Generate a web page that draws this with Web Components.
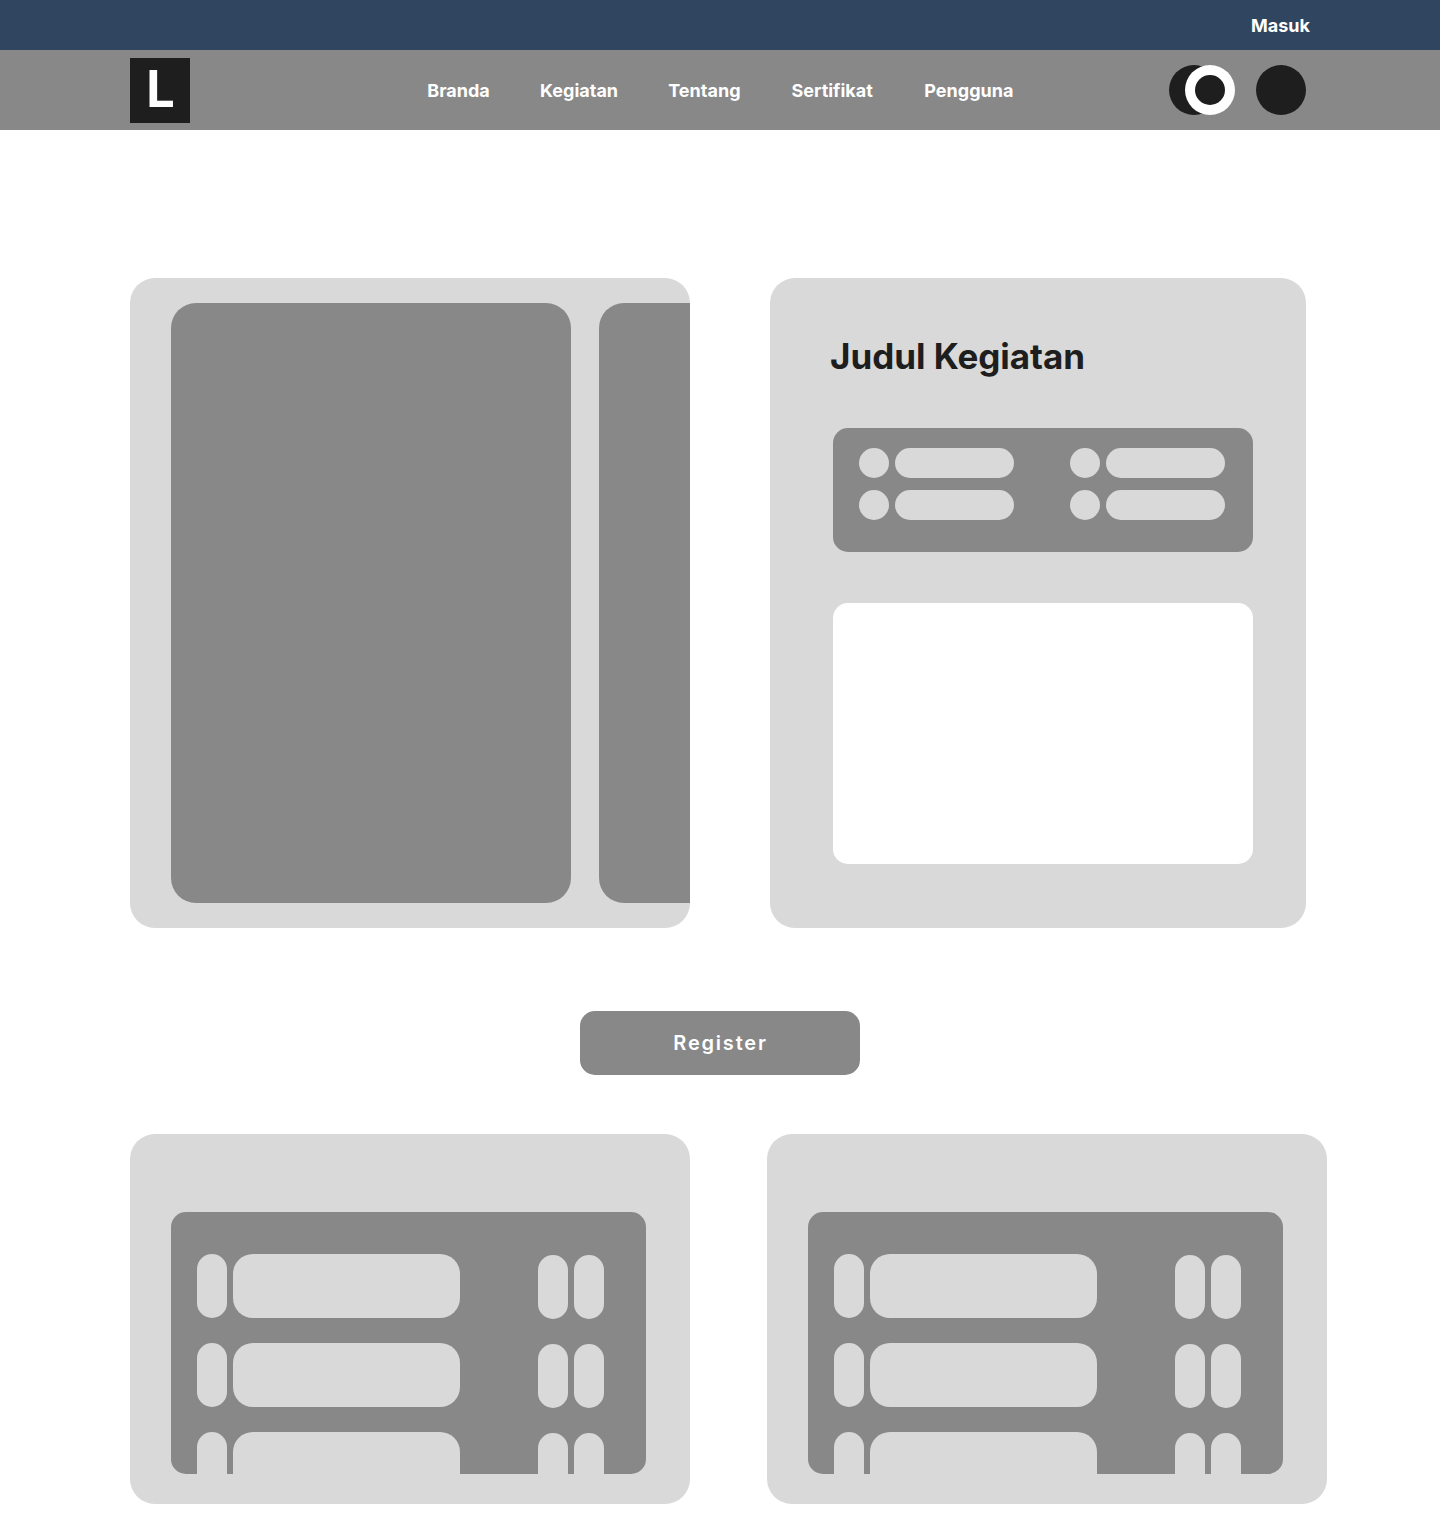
<!DOCTYPE html>
<html lang="id">
<head>
<meta charset="utf-8">
<title>Judul Kegiatan</title>
<style>
  :root { --navy:#2f4560; --mid:#888; --light:#d9d9d9; --ink:#1e1e1e; }
  body { margin:0; background:#fff; color:#fff; font-family:Inter, "Liberation Sans", sans-serif; }
  main { display:flex; flex-direction:column; height:1410px; overflow:hidden; }
  .row { display:flex; align-items:flex-start; padding-left:130px; }
  .hero { margin-top:148px; gap:80px; }
  .lists { margin-top:59px; gap:77px; }
  action-button { margin:83px auto 0; }
</style>
</head>
<body>
<top-bar>Masuk</top-bar>
<nav-bar>
  <brand-logo slot="logo">L</brand-logo>
  <nav-link style="--w:62.2px">Branda</nav-link>
  <nav-link style="--w:77.6px">Kegiatan</nav-link>
  <nav-link style="--w:72.6px">Tentang</nav-link>
  <nav-link style="--w:82.3px">Sertifikat</nav-link>
  <nav-link style="--w:89px">Pengguna</nav-link>
  <theme-toggle slot="tools"></theme-toggle>
  <user-dot slot="tools"></user-dot>
</nav-bar>
<main>
  <div class="row hero">
    <image-carousel></image-carousel>
    <event-card>Judul Kegiatan</event-card>
  </div>
  <action-button>Register</action-button>
  <div class="row lists">
    <list-card></list-card>
    <list-card></list-card>
  </div>
</main>
<script>
const define = (name, html) => customElements.define(name, class extends HTMLElement {
  constructor() {
    super();
    this.attachShadow({ mode: "open" }).innerHTML = html;
  }
});

define("top-bar", `<style>
  :host { display:flex; height:50px; box-sizing:border-box; padding:1px 130px 0 0; justify-content:flex-end; align-items:center; background:var(--navy); font-size:18px; font-weight:700; line-height:22px; }
</style><span><slot></slot></span>`);

define("nav-bar", `<style>
  :host { display:grid; grid-template-columns:297.3px 1fr auto; align-items:center; height:80px; box-sizing:border-box; padding:0 134px 0 130px; background:var(--mid); }
  nav { display:flex; gap:50.6px; padding-top:2px; }
  .tools { display:flex; gap:21px; }
</style><slot name="logo"></slot><nav><slot></slot></nav><div class="tools"><slot name="tools"></slot></div>`);

define("nav-link", `<style>
  :host { display:block; width:var(--w); font-size:18px; font-weight:700; line-height:22px; white-space:nowrap; }
</style><slot></slot>`);

define("brand-logo", `<style>
  :host { display:flex; width:60px; height:65px; margin-top:1px; box-sizing:border-box; padding:0 0 4px 1px; justify-content:center; align-items:center; background:var(--ink); font-size:50.5px; font-weight:700; line-height:60px; }
</style><span><slot></slot></span>`);

define("theme-toggle", `<style>
  :host, svg { display:block; width:66px; height:50px; }
</style><svg viewBox="0 0 66 50"><circle cx="25" cy="25" r="25" fill="#1e1e1e"/><circle cx="41" cy="25" r="25" fill="#fff"/><circle cx="41" cy="25" r="15" fill="#1e1e1e"/></svg>`);

define("user-dot", `<style>
  :host { display:block; width:50px; height:50px; border-radius:50%; background:var(--ink); }
</style>`);

define("image-carousel", `<style>
  :host { display:flex; gap:28px; width:560px; height:650px; box-sizing:border-box; padding:25px 0 25px 41px; border-radius:25px; background:var(--light); overflow:hidden; }
  div { flex:0 0 400px; border-radius:25px; background:var(--mid); }
</style><div></div><div></div>`);

define("info-item", `<style>
  :host { display:flex; gap:6px; }
  i { width:30px; height:30px; border-radius:15px; background:var(--light); }
  b { width:119px; height:30px; border-radius:15px; background:var(--light); }
</style><i></i><b></b>`);

define("event-card", `<style>
  :host { display:block; width:536px; height:650px; box-sizing:border-box; padding:56px 53px 0 63px; border-radius:25px; background:var(--light); }
  h1 { margin:0 0 0 -3px; color:var(--ink); font-size:35px; font-weight:700; line-height:44px; letter-spacing:-.04px; }
  .info { display:grid; grid-template-columns:155px 155px; gap:12px 56px; align-content:start; height:124px; box-sizing:border-box; margin-top:50px; padding:20px 26px; border-radius:15px; background:var(--mid); }
  .text { height:261px; margin-top:51px; border-radius:15px; background:#fff; }
  .info, .text { width:420px; }
</style><h1><slot></slot></h1>
<div class="info"><info-item></info-item><info-item></info-item><info-item></info-item><info-item></info-item></div>
<div class="text"></div>`);

define("action-button", `<style>
  :host { display:block; width:280px; height:64px; }
  button { display:block; width:100%; height:100%; margin:0; padding:0 0 0 1px; border:0; border-radius:15px; background:var(--mid); color:#fff; font:600 20px/24px Inter, "Liberation Sans", sans-serif; letter-spacing:1.8px; }
</style><button><slot></slot></button>`);

define("list-item", `<style>
  :host { display:flex; flex:none; gap:6px; height:64px; }
  i { width:30px; height:64px; border-radius:15px; background:var(--light); }
  b { width:227px; height:64px; border-radius:20px; background:var(--light); }
  span { display:flex; gap:6px; margin:1px 0 0 72px; }
</style><i></i><b></b><span><i></i><i></i></span>`);

define("list-card", `<style>
  :host { display:block; width:560px; height:370px; box-sizing:border-box; padding:78px 44px 30px 41px; border-radius:25px; background:var(--light); }
  div { display:flex; flex-direction:column; gap:25px; height:262px; box-sizing:border-box; padding:42px 26px 0; border-radius:15px; background:var(--mid); overflow:hidden; }
</style><div><list-item></list-item><list-item></list-item><list-item></list-item></div>`);
</script>
</body>
</html>
